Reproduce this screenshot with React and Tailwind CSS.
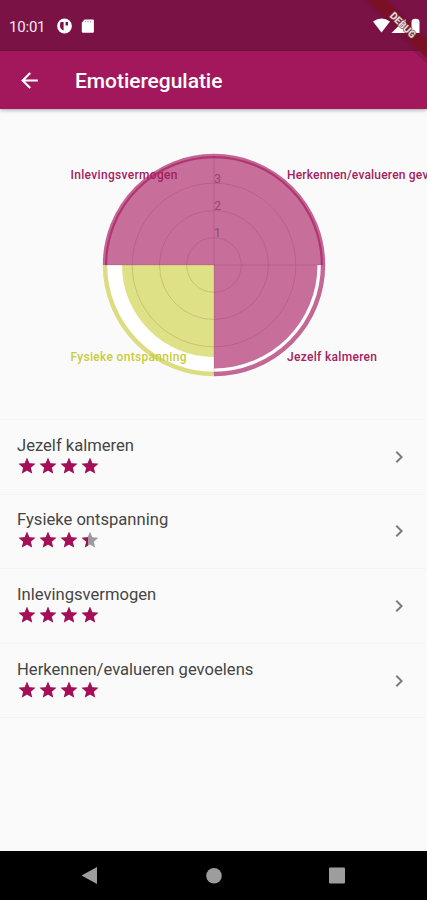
import { MdArrowBack, MdChevronRight, MdStar } from "react-icons/md";

const skills = [
  { name: "Jezelf kalmeren", score: 4 },
  { name: "Fysieke ontspanning", score: 3.4 },
  { name: "Inlevingsvermogen", score: 4 },
  { name: "Herkennen/evalueren gevoelens", score: 4 },
];

function StatusBar() {
  return (
    <div className="flex h-[51px] shrink-0 items-center bg-[#7b1245] pl-[9px] text-white">
      <span className="mt-[3px] w-[47px] text-[15px] leading-none tracking-[-0.2px] text-[#f6e9f0]">10:01</span>
      <svg width="40" height="20" viewBox="0 0 40 20" fill="none">
        <circle cx="8.5" cy="10" r="7.4" fill="#fff" />
        <path d="M4.6 6h3v8.4C5.5 13.8 4 12 4 10c0-1.5.2-3 .6-4zM9.6 6h2.4v3.6H9.6z" fill="#7b1245" />
        <path d="M28.5 3.5h8.2a1.2 1.2 0 0 1 1.2 1.2v10.8a1.2 1.2 0 0 1-1.2 1.2H27a1.2 1.2 0 0 1-1.2-1.2V6.8z" fill="#fff" />
        <path d="M29.7 5v1.3M32 5v1.3M34.3 5v1.3" stroke="#b98aa2" strokeWidth="1" />
      </svg>
      <svg className="mb-auto ml-auto h-[51px]" width="70" height="62" viewBox="0 0 70 62" preserveAspectRatio="xMinYMin slice" overflow="visible">
        <path d="M6 0h27l37 37v27z" fill="#6b1030" opacity=".35" />
        <path d="M11.5 0h17.5l41 41v17.5z" fill="#7c1020" opacity=".85" />
        <g fill="#fff">
          <path d="M16 21.5Q24.5 15.5 33 21.5L24.5 32.5z" />
          <path d="M48.5 19v14H34.5z" />
          <path d="M54.5 22q0-3.2 4-3.2t4 3.2v11h-8z" />
        </g>
        <text x="46" y="28.5" transform="rotate(45 46 25)" textAnchor="middle" fill="#eadadd" stroke="#7a4a56" strokeWidth="1.2" paintOrder="stroke" className="font-['Roboto',sans-serif] text-[10px] font-bold" textLength="32">
          DEBUG
        </text>
      </svg>
    </div>
  );
}

function Header() {
  return (
    <header className="flex h-[58px] shrink-0 items-center bg-[#a3185c] pl-[17px] text-white shadow-[0_1px_4px_rgba(0,0,0,0.35)]">
      <MdArrowBack size={25} />
      <h1 className="ml-[33px] mt-[2px] text-[21px] font-medium leading-none tracking-[-0.04px]">Emotieregulatie</h1>
    </header>
  );
}

function PolarChart() {
  return (
    <svg className="shrink-0 font-['Roboto',sans-serif]" width="427" height="310" viewBox="0 0 427 310">
      <circle cx="214" cy="156" r="109" fill="#fff" />
      <g fill="#a4175c" fillOpacity=".62">
        <path d="M214 156H105a109 109 0 0 1 218 0z" />
        <path d="M214 156h103.5a103.500 103.500 0 0 1-103.500 103.500z" />
      </g>
      <path d="M214 156v92a92 92 0 0 1-92-92z" fill="#c5c822" fillOpacity=".55" />
      <g fill="none" strokeWidth="4.4">
        <path d="M105 156a109 109 0 0 1 218 0a109 109 0 0 1-109 109" stroke="#a4175c" strokeOpacity=".65" />
        <path d="M214 265a109 109 0 0 1-109-109" stroke="#dcdd82" />
      </g>
      <g fill="none" stroke="#6b2048" strokeOpacity=".17">
        <circle cx="214" cy="156" r="27.3" />
        <circle cx="214" cy="156" r="54.5" />
        <circle cx="214" cy="156" r="81.8" />
        <path d="M105 156h218M214 47v218" />
      </g>
      <g fill="#98456f" fontSize="12.5">
        <text x="214" y="127.5">1</text>
        <text x="214" y="100.5">2</text>
        <text x="214" y="73.5">3</text>
      </g>
      <g fill="#a4205f" fontSize="12" fontWeight="500">
        <text x="70.5" y="70" textLength="107">Inlevingsvermogen</text>
        <text x="287" y="70" textLength="178">Herkennen/evalueren gevoelens</text>
        <text x="287" y="251.5" textLength="90">Jezelf kalmeren</text>
        <text x="70.5" y="251.5" textLength="116" fill="#c9cc3c">Fysieke ontspanning</text>
      </g>
    </svg>
  );
}

function Stars({ score }) {
  return (
    <div className="flex">
      {[0, 1, 2, 3].map((i) => {
        const filled = Math.min(1, Math.max(0, score - i));

        return (
          <span key={i} className="relative flex w-[20.8px] justify-center text-[#9b9b9b]">
            <MdStar size={20} />
            <span className="absolute left-0 top-0 overflow-hidden text-[#a60f58]" style={{ width: `${filled * 100}%` }}>
              <MdStar size={20} className="ml-[0.4px]" />
            </span>
          </span>
        );
      })}
    </div>
  );
}

function SkillRow({ name, score }) {
  return (
    <li className="flex h-[74.6px] items-center justify-between border-b border-[#f3f3f3] pl-[17px] pr-4">
      <div className="-mt-[2px]">
        <p className="text-[16.6px] leading-[20px] text-[#454545]">{name}</p>
        <Stars score={score} />
      </div>
      <MdChevronRight size={24} className="text-[#7c7c7c]" />
    </li>
  );
}

function NavigationBar() {
  return (
    <nav className="flex h-[49px] shrink-0 items-center justify-center bg-black">
      <svg width="427" height="49" viewBox="0 0 427 49" fill="#9d9d9d">
        <path d="M81.5 24.5L97 16v17z" />
        <circle cx="214" cy="24.7" r="7.8" />
        <rect x="329" y="16.5" width="16" height="16" rx="1" />
      </svg>
    </nav>
  );
}

export default function App() {
  return (
    <div className="flex h-[900px] w-[427px] flex-col overflow-hidden bg-[#fafafa] font-['Roboto',sans-serif]">
      <div className="relative z-10">
        <StatusBar />
        <Header />
      </div>
      <main className="flex flex-1 flex-col">
        <PolarChart />
        <ul className="border-t border-[#f7f7f7]">
          {skills.map((skill) => (
            <SkillRow key={skill.name} {...skill} />
          ))}
        </ul>
      </main>
      <NavigationBar />
    </div>
  );
}
